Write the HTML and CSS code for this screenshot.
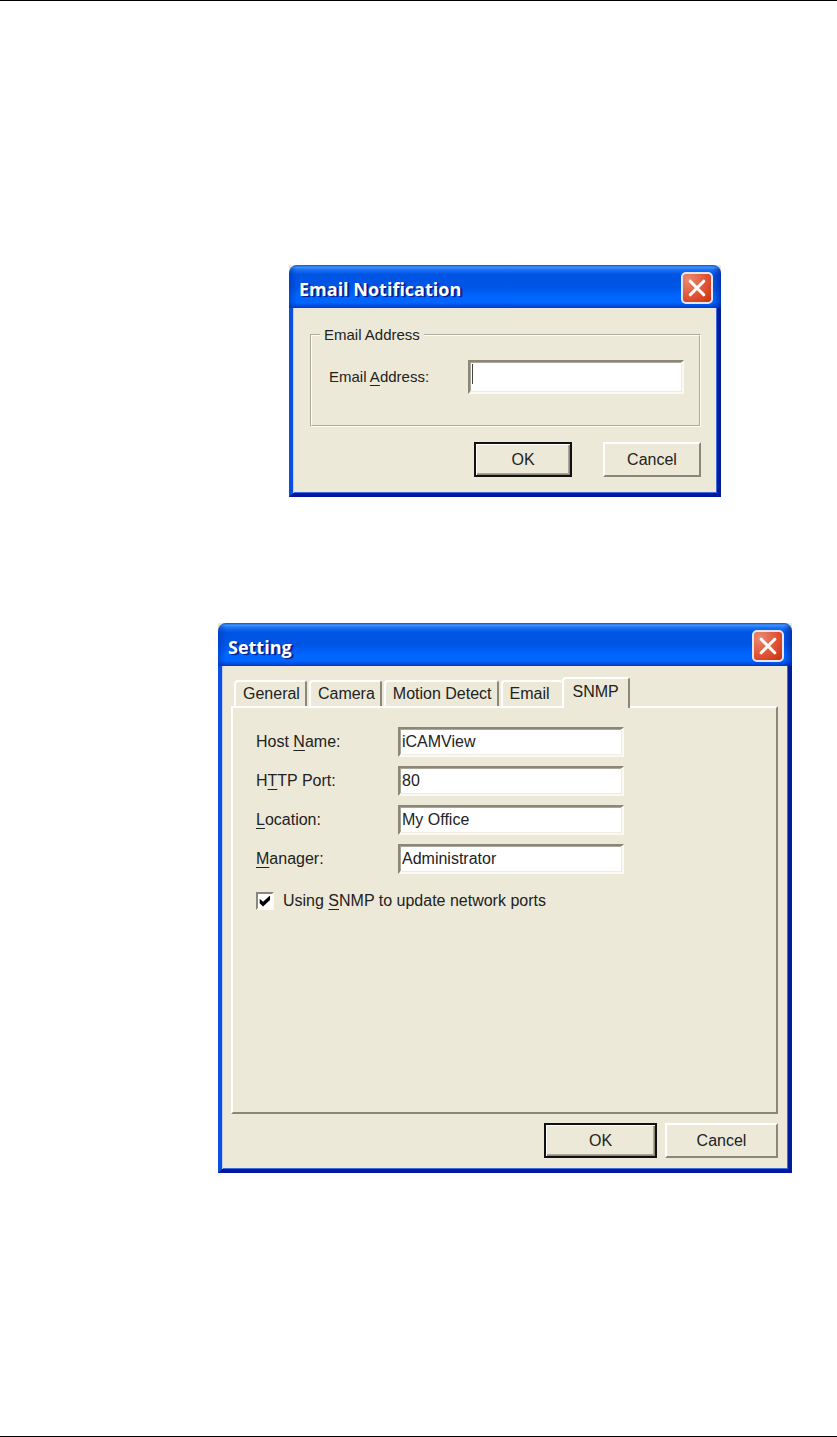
FILE: index.html
```html
<!DOCTYPE html>
<html lang="en">
    <head>
        <meta charset="utf-8">
        <title>iCAMView</title>
        <meta name="viewport" content="width=device-width, initial-scale=1">
        <link rel="stylesheet" href="styles.css">
    </head>
    <body>
        <main class="page">
            <!-- email dialog -->
            <form class="dialog email" action="javascript:">
                <header class="titlebar">
                    <h2>Email Notification</h2>
                    <button type="button" class="close" aria-label="Close">
                        <svg viewBox="0 0 27 27"><path d="M7 7L20 20M20 7L7 20"/></svg>
                    </button>
                </header>
                <div class="content">
                    <fieldset>
                        <legend>Email Address</legend>
                        <div class="row">
                            <label for="email">Email <u>A</u>ddress:</label>
                            <input id="email" class="text caret" type="text">
                        </div>
                    </fieldset>
                    <div class="buttons">
                        <button type="submit" class="btn default">OK</button>
                        <button type="button" class="btn">Cancel</button>
                    </div>
                </div>
            </form>

            <!-- setting dialog -->
            <form class="dialog setting" action="javascript:">
                <header class="titlebar">
                    <h2>Setting</h2>
                    <button type="button" class="close" aria-label="Close">
                        <svg viewBox="0 0 27 27"><path d="M7 7L20 20M20 7L7 20"/></svg>
                    </button>
                </header>
                <div class="content">
                    <div class="tabs" role="tablist">
                        <button type="button" role="tab" class="tab">General</button>
                        <button type="button" role="tab" class="tab">Camera</button>
                        <button type="button" role="tab" class="tab">Motion Detect</button>
                        <button type="button" role="tab" class="tab last">Email</button>
                        <button type="button" role="tab" class="tab active" aria-selected="true">SNMP</button>
                    </div>
                    <div class="panel" role="tabpanel">
                        <div class="fields">
                            <label for="host">Host <u>N</u>ame:</label>
                            <input id="host" class="text" type="text" value="iCAMView">
                            <label for="port">H<u>T</u>TP Port:</label>
                            <input id="port" class="text" type="text" value="80">
                            <label for="location"><u>L</u>ocation:</label>
                            <input id="location" class="text" type="text" value="My Office">
                            <label for="manager"><u>M</u>anager:</label>
                            <input id="manager" class="text" type="text" value="Administrator">
                        </div>
                        <div class="check">
                            <input id="snmp" type="checkbox" checked>
                            <label for="snmp">Using <u>S</u>NMP to update network ports</label>
                        </div>
                    </div>
                    <div class="buttons">
                        <button type="submit" class="btn default">OK</button>
                        <button type="button" class="btn">Cancel</button>
                    </div>
                </div>
            </form>
        </main>
    </body>
</html>
```
FILE: styles.css
```css
*{
    box-sizing: border-box;
    margin: 0;
    padding: 0;
}
body{
    background: #fff;
    color: #222;
    font: 16px/20px "Liberation Sans", Arial, sans-serif;
}
button, input{
    font: inherit;
    color: inherit;
}
u{
    text-underline-offset: 3px;
}
.page{
    display: flex;
    flex-direction: column;
    align-items: center;
    gap: 126px;
    min-height: 100vh;
    padding: 264px 0 40px 173px;
    border-top: 1px solid #000;
    border-bottom: 1px solid #000;
}

/* window frame */
.dialog{
    max-width: 100%;
    background: #ece9d8;
}
.email{
    width: 432px;
}
.setting{
    width: 574px;
}
.titlebar{
    display: flex;
    align-items: center;
    justify-content: space-between;
    height: 43px;
    padding: 5px 8px 2px 10px;
    border-radius: 8px 8px 0 0;
    background:
        linear-gradient(90deg, #0030b080, transparent 8px, transparent calc(100% - 8px), #001a9099),
        linear-gradient(#0a4fd8, #3d95ff 5%, #1a70f0 11%, #0054e3 22%, #0055e5 50%, #0066ff 74%, #0066ff 88%, #0046d8 96%, #003cc8);
}
.titlebar h2{
    padding-top: 2px;
    color: #fff;
    font: bold 18px/24px "Open Sans", "Trebuchet MS", sans-serif;
    text-shadow: 2px 1px 1px #0a1883;
}
.close{
    width: 32px;
    height: 32px;
    border: 2px solid #e4e6f6;
    border-radius: 5px;
    background: radial-gradient(circle at 20% 20%, #ea8a70, #e05436 55%, #c83008);
}
.close svg{
    display: block;
    width: 100%;
    fill: none;
    stroke: #fff;
    stroke-width: 3;
    stroke-linecap: round;
}
.content{
    border: 4px solid;
    border-top: 0;
    border-color: #0a50e0 #001c9c #0018a0 #0a50e0;
    box-shadow: inset 1px 0 #c4cee0, inset -1px -1px #3a6ee0;
}
.email .content{
    padding: 17px 16px 16px 17px;
}
.setting .content{
    padding: 11px 10px 11px 9px;
}

/* controls */
.text{
    width: 100%;
    height: 30px;
    padding: 0 2px 1px;
    border: 2px solid;
    border-color: #8a8778 #faf9f2 #faf9f2 #8a8778;
    outline: 0;
    background: #fff;
    box-shadow: inset -1px -1px #efecdf, inset 1px 1px #aaa799;
}
.btn{
    height: 35px;
    border: 2px solid;
    border-color: #fff #8a8778 #8a8778 #fff;
    background: #ece9d8;
}
.default{
    border-color: #111;
    box-shadow: inset 1px 1px #fff, inset -1px -1px #8a8778, inset -2px -2px #aca899;
}
.buttons{
    display: flex;
    justify-content: flex-end;
}

/* email */
fieldset{
    padding: 0 8px;
    border: 2px groove #fffdf0;
}
legend{
    padding: 0 4px;
}
.email legend, .email label{
    font-size: 15px;
}
.row{
    display: grid;
    grid-template-columns: 139px 1fr;
    align-items: center;
    padding: 15px 7px 31px 9px;
}
.email .text{
    height: 34px;
}
.caret{
    background: #fff linear-gradient(#444, #444) 2px 2px / 1px 20px no-repeat;
}
.email .buttons{
    gap: 31px;
    margin-top: 15px;
}
.email .btn{
    width: 98px;
}

/* setting */
.tabs{
    display: flex;
    align-items: flex-end;
    height: 31px;
    margin-bottom: -2px;
    padding: 0 0 2px 3px;
}
.tab{
    height: 26px;
    margin-right: 2px;
    padding: 0 5px 0 7px;
    border: 2px solid;
    border-color: #fff #8a8778 transparent #fff;
    border-bottom: 0;
    border-radius: 4px 3px 0 0;
    background: #ece9d8;
    white-space: nowrap;
}
.last{
    margin-right: 0;
    padding: 0 12px 0 7px;
    border-right: 0;
}
.active{
    position: relative;
    align-self: flex-start;
    height: 31px;
    margin-right: 0;
    padding: 0 9px 4px;
}
.panel{
    min-height: 408px;
    padding: 19px 23px;
    border: 2px solid;
    border-color: #fff #8a8778 #8a8778 #fff;
}
.fields{
    display: grid;
    grid-template-columns: 142px minmax(0, 226px);
    row-gap: 9px;
    align-items: center;
}
.check{
    display: flex;
    align-items: center;
    gap: 9px;
    margin-top: 17px;
}
.check input{
    flex: none;
    width: 18px;
    height: 18px;
    appearance: none;
    border: 2px solid;
    border-color: #8a8778 #faf9f2 #faf9f2 #8a8778;
    background: #fff;
}
.check input:checked::before{
    content: "";
    display: block;
    width: 14px;
    height: 14px;
    background: #000;
    clip-path: polygon(12% 34%, 36% 56%, 86% 10%, 86% 42%, 36% 90%, 12% 66%);
}
.setting .buttons{
    gap: 8px;
    margin-top: 9px;
}
.setting .btn{
    width: 113px;
}
```
